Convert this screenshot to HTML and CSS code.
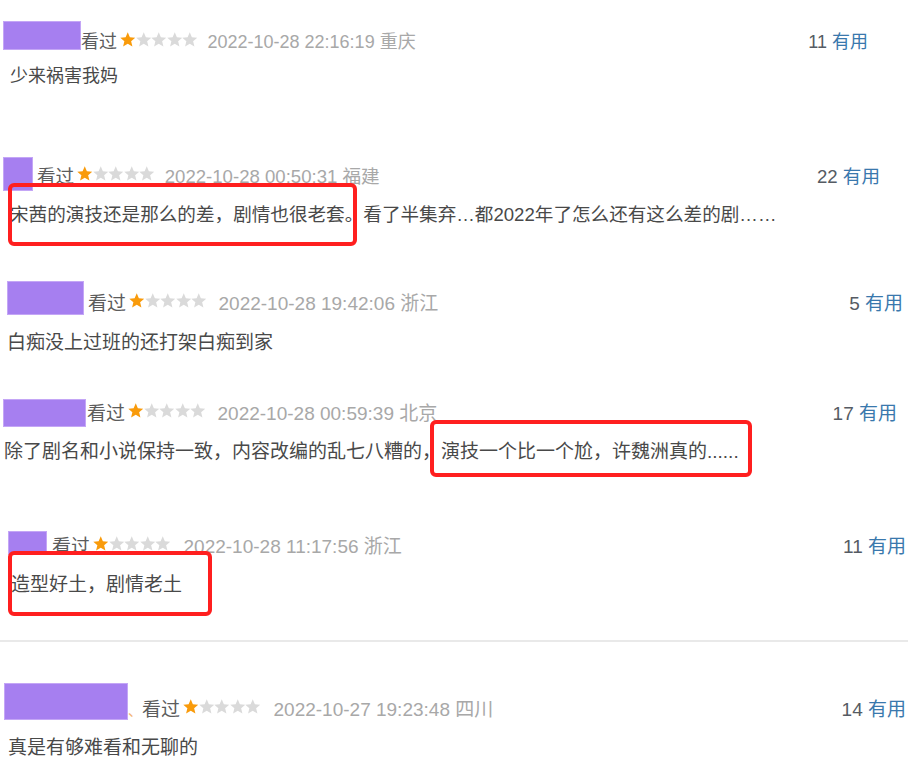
FILE: index.html
```html
<!DOCTYPE html>
<html lang="zh-CN">
  <head>
    <meta charset="UTF-8" />
    <meta name="viewport" content="width=device-width, initial-scale=1.0" />
    <title>短评</title>
    <link rel="stylesheet" href="styles.css">
  </head>
  <body>
    <svg width="0" height="0" style="position: absolute">
      <defs>
        <path id="star" d="M12 1.5l3 7.1 7.6.6-5.8 5 1.8 7.4L12 17.6l-6.6 4 1.8-7.4-5.8-5 7.6-.6z" />
      </defs>
    </svg>

    <div class="list">
      <!-- 1 -->
      <div class="comment c1">
        <div class="head">
          <span class="avatar"></span>
          <span class="status">看过</span>
          <span class="stars"><svg viewBox="1 1 22 22" class="on"><use href="#star"/></svg><svg viewBox="1 1 22 22"><use href="#star"/></svg><svg viewBox="1 1 22 22"><use href="#star"/></svg><svg viewBox="1 1 22 22"><use href="#star"/></svg><svg viewBox="1 1 22 22"><use href="#star"/></svg></span>
          <span class="time">2022-10-28 22:16:19 重庆</span>
          <span class="votes"><span class="count">11</span> <a class="useful">有用</a></span>
        </div>
        <p class="text">少来祸害我妈</p>
      </div>

      <!-- 2 -->
      <div class="comment c2">
        <div class="head">
          <span class="avatar"></span>
          <span class="status">看过</span>
          <span class="stars"><svg viewBox="1 1 22 22" class="on"><use href="#star"/></svg><svg viewBox="1 1 22 22"><use href="#star"/></svg><svg viewBox="1 1 22 22"><use href="#star"/></svg><svg viewBox="1 1 22 22"><use href="#star"/></svg><svg viewBox="1 1 22 22"><use href="#star"/></svg></span>
          <span class="time">2022-10-28 00:50:31 福建</span>
          <span class="votes"><span class="count">22</span> <a class="useful">有用</a></span>
        </div>
        <p class="text">宋茜的演技还是那么的差，剧情也很老套。看了半集弃…都2022年了怎么还有这么差的剧……</p>
        <div class="mark"></div>
      </div>

      <!-- 3 -->
      <div class="comment c3">
        <div class="head">
          <span class="avatar"></span>
          <span class="status">看过</span>
          <span class="stars"><svg viewBox="1 1 22 22" class="on"><use href="#star"/></svg><svg viewBox="1 1 22 22"><use href="#star"/></svg><svg viewBox="1 1 22 22"><use href="#star"/></svg><svg viewBox="1 1 22 22"><use href="#star"/></svg><svg viewBox="1 1 22 22"><use href="#star"/></svg></span>
          <span class="time">2022-10-28 19:42:06 浙江</span>
          <span class="votes"><span class="count">5</span> <a class="useful">有用</a></span>
        </div>
        <p class="text">白痴没上过班的还打架白痴到家</p>
      </div>

      <!-- 4 -->
      <div class="comment c4">
        <div class="head">
          <span class="avatar"></span>
          <span class="status">看过</span>
          <span class="stars"><svg viewBox="1 1 22 22" class="on"><use href="#star"/></svg><svg viewBox="1 1 22 22"><use href="#star"/></svg><svg viewBox="1 1 22 22"><use href="#star"/></svg><svg viewBox="1 1 22 22"><use href="#star"/></svg><svg viewBox="1 1 22 22"><use href="#star"/></svg></span>
          <span class="time">2022-10-28 00:59:39 北京</span>
          <span class="votes"><span class="count">17</span> <a class="useful">有用</a></span>
        </div>
        <p class="text">除了剧名和小说保持一致，内容改编的乱七八糟的，演技一个比一个尬，许魏洲真的......</p>
        <div class="mark"></div>
      </div>

      <!-- 5 -->
      <div class="comment c5">
        <div class="head">
          <span class="avatar"></span>
          <span class="status">看过</span>
          <span class="stars"><svg viewBox="1 1 22 22" class="on"><use href="#star"/></svg><svg viewBox="1 1 22 22"><use href="#star"/></svg><svg viewBox="1 1 22 22"><use href="#star"/></svg><svg viewBox="1 1 22 22"><use href="#star"/></svg><svg viewBox="1 1 22 22"><use href="#star"/></svg></span>
          <span class="time">2022-10-28 11:17:56 浙江</span>
          <span class="votes"><span class="count">11</span> <a class="useful">有用</a></span>
        </div>
        <p class="text">造型好土，剧情老土</p>
        <div class="mark"></div>
      </div>

      <hr class="divider" />

      <!-- 6 -->
      <div class="comment c6">
        <div class="head">
          <span class="avatar"></span>
          <span class="dot">、</span>
          <span class="status">看过</span>
          <span class="stars"><svg viewBox="1 1 22 22" class="on"><use href="#star"/></svg><svg viewBox="1 1 22 22"><use href="#star"/></svg><svg viewBox="1 1 22 22"><use href="#star"/></svg><svg viewBox="1 1 22 22"><use href="#star"/></svg><svg viewBox="1 1 22 22"><use href="#star"/></svg></span>
          <span class="time">2022-10-27 19:23:48 四川</span>
          <span class="votes"><span class="count">14</span> <a class="useful">有用</a></span>
        </div>
        <p class="text">真是有够难看和无聊的</p>
      </div>
    </div>
  </body>
</html>
```

FILE: styles.css
```css
body {
  margin: 0;
  background-color: #fff;
  font-family: 'Liberation Sans', 'Noto Sans CJK SC', sans-serif;
  color: #494949;
}

.list {
  width: 908px;
}

.comment {
  position: relative;
  font-size: 19px;
}

.head {
  display: flex;
  align-items: center;
  height: 30px;
  white-space: nowrap;
}

.avatar {
  display: block;
  background-color: #a67ff0;
  box-shadow: inset 0 0 0 1px #c4a6f6;
}

.status {
  color: #5c5c5c;
}

.stars {
  display: flex;
  margin-left: 3px;
}

.stars svg {
  width: 15.5px;
  height: 15.5px;
  fill: #dadada;
}

.stars svg.on {
  fill: #f99b0b;
}

.time {
  color: #a8a8a8;
  margin-left: 10px;
}

.votes {
  margin-left: auto;
}

.count {
  color: #555b63;
}

.useful {
  color: #3a78ad;
}

.text {
  margin: 11px 0 0;
  line-height: 30px;
}

.mark {
  position: absolute;
  border: 4px solid #ff1f1f;
  border-radius: 6px;
  box-sizing: border-box;
}

.divider {
  border: none;
  border-top: 2px solid #e9e9e9;
  margin: 40px 0 0;
}

/* each screenshot strip has its own scale/offset */
.c1 { margin-top: 25px; font-size: 18px; }
.c1 .head { padding-right: 40px; }
.c1 .avatar { width: 78px; height: 29px; margin: -9px 0 0 3px; }
.c1 .text { padding-left: 10px; margin-top: 6px; }

.c2 { margin-top: 68px; font-size: 18.6px; }
.c2 .head { padding-right: 28px; }
.c2 .avatar { width: 30px; height: 34px; margin: 0 4px 0 3px; }
.c2 .text { padding-left: 10px; }
.c2 .mark { left: 8px; top: 24px; width: 349px; height: 63px; }

.c3 { margin-top: 56px; }
.c3 .head { padding-right: 5px; }
.c3 .avatar { width: 77px; height: 34px; margin: -6px 4px 0 7px; }
.c3 .time { margin-left: 12px; }
.c3 .text { padding-left: 7px; margin-top: 12px; }

.c4 { margin-top: 38px; }
.c4 .head { padding-right: 11px; }
.c4 .avatar { width: 83px; height: 28px; margin: 4px 1px 0 3px; }
.c4 .time { margin-left: 12px; }
.c4 .text { padding-left: 4px; }
.c4 .mark { left: 430px; top: 24px; width: 322px; height: 57px; }

.c5 { margin-top: 62px; }
.c5 .head { padding-right: 2px; }
.c5 .avatar { width: 39px; height: 24px; margin: -2px 5px 0 8px; }
.c5 .time { margin-left: 13px; }
.c5 .text { padding-left: 11px; }
.c5 .mark { left: 8px; top: 22px; width: 204px; height: 65px; }

.c6 { margin-top: 50px; }
.c6 .head { padding-right: 2px; }
.c6 .avatar { width: 124px; height: 37px; margin: -12px 0 0 4px; }
.c6 .dot { color: #f3b77a; font-size: 14px; width: 14px; overflow: hidden; align-self: flex-end; line-height: 22px; }
.c6 .time { margin-left: 13px; }
.c6 .text { padding-left: 8px; }
```
